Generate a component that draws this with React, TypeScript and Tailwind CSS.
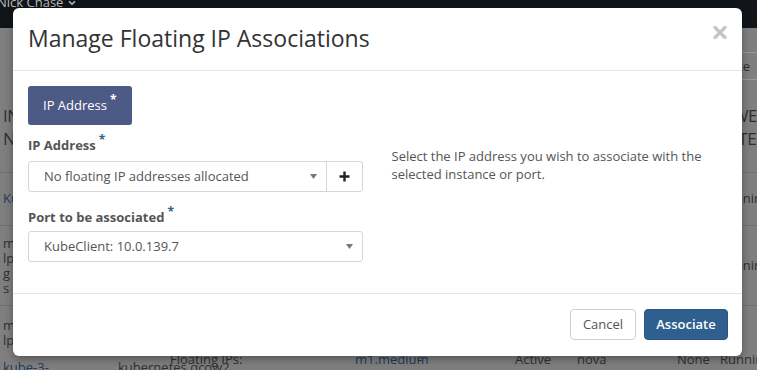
import { ChevronDown } from 'lucide-react'

const font = { fontFamily: '"Open Sans", "Noto Sans", Arial, sans-serif' }

function Caret() {
  return (
    <svg width="7" height="5" viewBox="0 0 7 5" className="shrink-0">
      <path d="M0 0 L7 0 L3.5 5 Z" fill="#777" />
    </svg>
  )
}

function Required({ light }: { light?: boolean }) {
  return (
    <span className={`relative -top-[6px] ml-[3px] text-[12px] font-bold ${light ? 'text-white' : 'text-[#2a6496]'}`}>*</span>
  )
}

function Background() {
  return (
    <div className="flex flex-col w-full h-full text-[#2f2f2f] text-[13px] whitespace-nowrap">
      <div className="h-[28px] bg-[#111519] flex flex-col shrink-0">
        <div className="flex items-center gap-1 -mt-[7px] -ml-[3px] text-[13px] text-[#b9b9b9]">
          Nick Chase
          <ChevronDown size={10} strokeWidth={4} className="text-[#b9b9b9]" />
        </div>
      </div>
      <div className="h-[72px] shrink-0 flex justify-end items-start pt-[24px]">
        <div className="h-[28px] w-[30px] -mr-[11px] overflow-hidden rounded border border-[#9a9a9a] leading-[26px] flex justify-end pr-[17px]">Instance</div>
      </div>
      <div className="h-[72px] shrink-0 flex justify-between pt-[4px] text-[17px] leading-[23px] tracking-tight">
        <div className="pl-[3px]">INSTANCE<br />NAME</div>
        <div className="-mr-[10px]">POWER<br />STATE</div>
      </div>
      <div className="h-[53px] shrink-0 border-t border-[#6f6f6f] flex justify-between items-center">
        <div className="pl-[3px] text-[#203b58]">Kube</div>
        <div className="-mr-[12px]">Running</div>
      </div>
      <div className="h-[80px] shrink-0 border-t border-[#6f6f6f] flex justify-between items-center">
        <div className="pl-[3px] leading-[15px]">m<br />lp<br />g<br />s</div>
        <div className="-mr-[12px]">Running</div>
      </div>
      <div className="flex-1 border-t border-[#6f6f6f] flex items-start leading-[15px]">
        <div className="pl-[3px] pt-[12px] w-[118px] shrink-0">
          m<br />lp<br /><div className="mt-[12px] text-[#203b58]">kube-3-</div>
        </div>
        <div className="pt-[54px] w-[52px] shrink-0">kubernetes.qcow2</div>
        <div className="pt-[46px] w-[185px] shrink-0">Floating IPs:</div>
        <div className="pt-[46px] w-[63px] shrink-0 text-[#203b58]">m1.medium</div>
        <div className="pt-[46px] w-[97px] shrink-0">-</div>
        <div className="pt-[46px] w-[62px] shrink-0">Active</div>
        <div className="pt-[46px] w-[100px] shrink-0">nova</div>
        <div className="pt-[46px] w-[43px] shrink-0">None</div>
        <div className="pt-[46px]">Running</div>
      </div>
    </div>
  )
}

export default function App() {
  return (
    <div className="relative w-[757px] h-[370px] overflow-hidden bg-[#7f7f7f]" style={font}>
      <Background />

      <div className="absolute left-[13px] top-[8px] w-[729px] h-[348px] bg-white rounded-[6px] shadow-[0_3px_9px_rgba(0,0,0,0.35)] flex flex-col">
        <div className="h-[63px] shrink-0 border-b border-[#e5e5e5] flex items-center justify-between pl-[15px] pr-[15px]">
          <h4 className="text-[23px] text-[#333] leading-none -mt-[2px]">Manage Floating IP Associations</h4>
          <svg width="14" height="13" viewBox="0 0 14 13" className="-mt-[14px]">
            <path d="M2 1.5 L12 11.5 M12 1.5 L2 11.5" stroke="#c6c6c6" strokeWidth="3.4" strokeLinecap="round" />
          </svg>
        </div>

        <div className="flex-1 px-[15px] pt-[15px]">
          <div className="inline-flex items-center h-[39px] px-[15px] rounded-[3px] bg-[#4d5a85] text-white text-[13px]">
            IP Address<Required light />
          </div>

          <div className="grid grid-cols-2 mt-[11px]">
            <div className="pr-[15px] flex flex-col">
              <label className="text-[13px] font-bold text-[#555] leading-[18px]">
                IP Address<Required />
              </label>
              <div className="mt-[6px] flex h-[31px] border border-[#d6d6d6] rounded-[3px] text-[13px] text-[#555]">
                <div className="flex-1 flex items-center justify-between pl-[15px] pr-[9px]">
                  No floating IP addresses allocated
                  <Caret />
                </div>
                <div className="w-[36px] border-l border-[#d6d6d6] flex items-center justify-center">
                  <svg width="11" height="11" viewBox="0 0 11 11">
                    <path d="M5.5 0.5 V10.5 M0.5 5.5 H10.5" stroke="#222" strokeWidth="2.4" />
                  </svg>
                </div>
              </div>

              <label className="mt-[16px] text-[13px] font-bold text-[#555] leading-[18px]">
                Port to be associated<Required />
              </label>
              <div className="mt-[4px] flex items-center justify-between h-[31px] border border-[#d6d6d6] rounded-[3px] pl-[15px] pr-[9px] text-[13px] text-[#555]">
                KubeClient: 10.0.139.7
                <Caret />
              </div>
            </div>

            <div className="pl-[14px] pt-[11px] text-[13px] leading-[18px] text-[#555]">
              Select the IP address you wish to associate with the selected instance or port.
            </div>
          </div>
        </div>

        <div className="h-[63px] shrink-0 border-t border-[#e5e5e5] flex items-start justify-end gap-[8px] pt-[15px] pr-[14px]">
          <button className="h-[31px] w-[66px] rounded-[4px] border border-[#cfcfcf] bg-white text-[13px] text-[#555]">Cancel</button>
          <button className="h-[31px] w-[84px] rounded-[4px] bg-[#2f5f8f] border border-[#2a5582] text-[13px] font-semibold text-white">Associate</button>
        </div>
      </div>
    </div>
  )
}
